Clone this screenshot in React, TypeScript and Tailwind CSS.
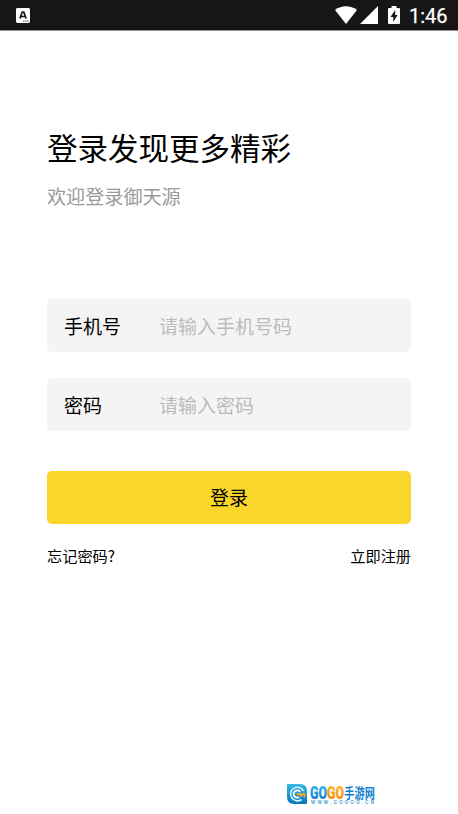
import type { ReactNode } from "react";

function StatusBar() {
  return (
    <header className="flex h-[31px] items-center border-b border-[#918f90] bg-[#171516] pl-4 pr-[11px] text-white">
      <svg viewBox="0 0 14 15" className="h-[15px] w-[14px]">
        <rect width="14" height="15" rx="1.4" fill="#fff" />
        <path d="M4 10.5 6.2 4h1.6L10 10.5M5 8.5h4" fill="none" stroke="#171516" strokeWidth="1.7" />
        <path d="M7 13.2h6" stroke="#777" strokeWidth="1.2" strokeDasharray="1.5 .5" />
      </svg>
      <div className="ml-auto flex items-center">
        <svg viewBox="0 0 22 18" className="h-[18px] w-[22px]" fill="#fff">
          <path d="M0 4C6.5-1 15.5-1 22 4L11 18Z" />
        </svg>
        <svg viewBox="0 0 18 18" className="ml-[3px] h-[18px] w-[18px]" fill="#fff">
          <path d="M18 0v18H0Z" />
        </svg>
        <svg viewBox="0 0 12 18" className="ml-[10px] h-[18px] w-3">
          <path d="M3.5 0h5v2H11q1 0 1 1v14q0 1-1 1H1q-1 0-1-1V3q0-1 1-1h2.5Z" fill="#fff" />
          <path d="M7.2 4 2.5 11H5.3v5L9.6 9H7.2Z" fill="#171516" />
        </svg>
        <span className="ml-[9px] w-[38px] whitespace-nowrap pt-[2px] font-['Roboto'] text-[20px] leading-[28px] [-webkit-text-stroke:0.25px_white]">
          1:46
        </span>
      </div>
    </header>
  );
}

function Field({ label, placeholder }: { label: string; placeholder: string }) {
  return (
    <label className="flex h-[53px] items-center rounded-[5px] bg-[#f4f4f4] pl-[17px] pt-px text-[19px]">
      <span className="w-[95px] shrink-0 text-black">{label}</span>
      <input
        className="min-w-0 flex-1 bg-transparent outline-none placeholder:text-[#bbbbbb]"
        placeholder={placeholder}
      />
    </label>
  );
}

function TextLink({ children }: { children: ReactNode }) {
  return <button className="text-[15.2px] leading-[22px] text-black">{children}</button>;
}

function SiteLogo() {
  return (
    <div className="absolute left-[287px] top-[784px] flex">
      <svg viewBox="0 0 20 20" className="h-5 w-5">
        <defs>
          <linearGradient id="badge" x2="0" y2="1">
            <stop stopColor="#35b9e8" />
            <stop offset="1" stopColor="#0877bd" />
          </linearGradient>
        </defs>
        <path d="M1 0h12q7 0 7 7v12q0 1-1 1H7q-7 0-7-7V1q0-1 1-1Z" fill="url(#badge)" />
        <path d="M16.5 7A6.8 6.8 0 1 0 14.5 15.5" fill="none" stroke="#d9f2ff" strokeWidth="1.6" />
        <path d="M13.2 8A3.6 3.6 0 1 0 12 13.2" fill="none" stroke="#fff" strokeWidth="1.9" />
        <path d="M9.5 10.2h8v3M14 10.2v2.6" fill="none" stroke="#ffa51f" strokeWidth="2" />
      </svg>
      <svg viewBox="0 0 66 22" className="ml-[3px] h-[22px] w-[66px] overflow-visible">
        <defs>
          <linearGradient id="blue" x2="0" y2="1">
            <stop offset=".2" stopColor="#27b4f0" />
            <stop offset="1" stopColor="#0868b5" />
          </linearGradient>
          <linearGradient id="orange" x2="0" y2="1">
            <stop offset=".2" stopColor="#ffb521" />
            <stop offset="1" stopColor="#f57c0b" />
          </linearGradient>
        </defs>
        <text
          x="0"
          y="15"
          textLength="34"
          lengthAdjust="spacingAndGlyphs"
          fontFamily="'Roboto', sans-serif"
          fontSize="18.5"
          fontWeight="900"
          strokeWidth=".2"
        >
          <tspan fill="url(#blue)" stroke="url(#blue)">GO</tspan>
          <tspan fill="url(#orange)" stroke="url(#orange)">GO</tspan>
        </text>
        <text
          x="34.3"
          y="14"
          textLength="30.5"
          lengthAdjust="spacingAndGlyphs"
          fontFamily="'Noto Sans CJK SC', sans-serif"
          fontSize="13.5"
          fontWeight="700"
          fill="#0d83d0"
        >
          手游网
        </text>
        <text
          x="1"
          y="20"
          textLength="63"
          fontFamily="'Liberation Sans', sans-serif"
          fontSize="4.5"
          fontWeight="700"
          fill="#4aa3d0"
        >
          WWW.GOOGO.CN
        </text>
      </svg>
    </div>
  );
}

export default function App() {
  return (
    <div className="relative h-[814px] w-[458px] overflow-hidden bg-white font-['Noto_Sans_CJK_SC',sans-serif]">
      <StatusBar />
      <main className="px-[47px] pt-[94px]">
        <h1 className="text-[30.5px] leading-[44px] text-black">登录发现更多精彩</h1>
        <p className="mt-[13px] text-[19.1px] leading-[28px] text-[#999999]">欢迎登录御天源</p>

        <form className="mt-[89px] flex flex-col" onSubmit={(e) => e.preventDefault()}>
          <div className="flex flex-col gap-[26px]">
            <Field label="手机号" placeholder="请输入手机号码" />
            <Field label="密码" placeholder="请输入密码" />
          </div>
          <button className="mt-10 h-[53px] rounded-[5px] bg-[#fad62b] text-[19px] text-black">
            登录
          </button>
        </form>

        <div className="mt-5 flex justify-between">
          <TextLink>忘记密码?</TextLink>
          <TextLink>立即注册</TextLink>
        </div>
      </main>
      <SiteLogo />
    </div>
  );
}
